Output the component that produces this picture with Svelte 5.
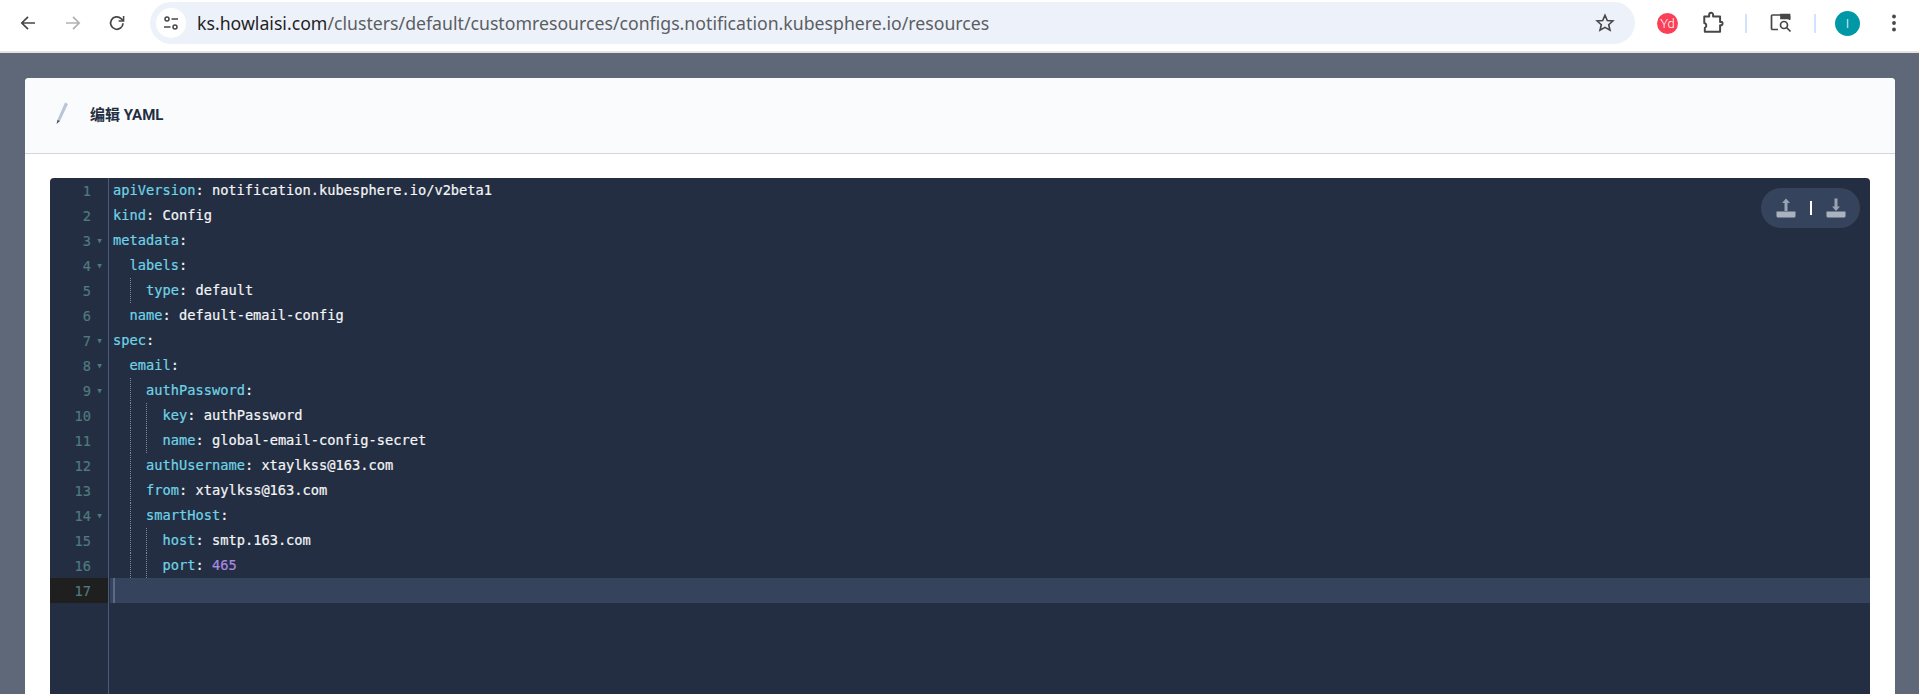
<script lang="ts">
  type Line = { indent: number; key?: string; value?: string; num?: string; fold?: boolean };

  const lines: Line[] = [
    { indent: 0, key: "apiVersion", value: "notification.kubesphere.io/v2beta1" },
    { indent: 0, key: "kind", value: "Config" },
    { indent: 0, key: "metadata", fold: true },
    { indent: 1, key: "labels", fold: true },
    { indent: 2, key: "type", value: "default" },
    { indent: 1, key: "name", value: "default-email-config" },
    { indent: 0, key: "spec", fold: true },
    { indent: 1, key: "email", fold: true },
    { indent: 2, key: "authPassword", fold: true },
    { indent: 3, key: "key", value: "authPassword" },
    { indent: 3, key: "name", value: "global-email-config-secret" },
    { indent: 2, key: "authUsername", value: "xtaylkss@163.com" },
    { indent: 2, key: "from", value: "xtaylkss@163.com" },
    { indent: 2, key: "smartHost", fold: true },
    { indent: 3, key: "host", value: "smtp.163.com" },
    { indent: 3, key: "port", num: "465" },
    { indent: 0 },
  ];
  const activeLine = 16;
</script>

<div class="page">
  <header class="toolbar">
    <div class="nav">
      <svg class="nav-icon" viewBox="0 0 20 20" fill="none" stroke="#474747" stroke-width="1.700"><path d="M17 10H4M10 3.800 3.800 10l6.200 6.200" /></svg>
      <svg class="nav-icon" viewBox="0 0 20 20" fill="none" stroke="#b2b2b2" stroke-width="1.700"><path d="M3 10h13M10 3.800l6.200 6.200-6.200 6.200" /></svg>
      <svg class="nav-icon" viewBox="0 0 20 20" fill="none" stroke="#474747" stroke-width="1.700"><path d="M16 10.200a6.200 6.200 0 1 1-1.900-4.600L16 7.400" /><path d="M16.600 3v5h-5" stroke-width="1.500" /></svg>
    </div>
    <div class="omnibox">
      <span class="site-info">
        <svg width="16" height="16" viewBox="0 0 16 16" fill="none" stroke="#474747" stroke-width="1.500"><circle cx="4" cy="4" r="2" /><path d="M8.500 4H15M1 12h6.500" /><circle cx="12" cy="12" r="2" /></svg>
      </span>
      <span class="url"><span class="host">ks.howlaisi.com</span>/clusters/default/customresources/configs.notification.kubesphere.io/resources</span>
      <svg class="star" width="20" height="20" viewBox="0 0 20 20" fill="none" stroke="#474747" stroke-width="1.600"><path d="m10 2.300 2.300 5.200 5.600.5-4.200 3.700 1.300 5.500L10 14.300l-5 2.900 1.300-5.500L2.100 8l5.600-.5z" /></svg>
    </div>
    <div class="actions">
      <span class="yd">Yd</span>
      <svg class="puzzle" width="22" height="24" viewBox="0 0 20 22" fill="none" stroke="#474747" stroke-width="1.800"><path d="M2 5h4.500V3.500a1.800 1.800 0 0 1 3.600 0V5h6.400v5H18a1.800 1.800 0 0 1 0 3h-1.500v6H2.500v-3.500a2.500 2.500 0 0 0 1-3.500 2.500 2.500 0 0 0-1.500-1z" stroke-linejoin="round" /></svg>
      <span class="divider"></span>
      <svg class="tab-search" width="22" height="20" viewBox="0 0 22 20" fill="none" stroke="#474747" stroke-width="1.700"><path d="M8 16.500H2.500a1 1 0 0 1-1-1V3a1 1 0 0 1 1-1h16a1 1 0 0 1 1 1v4" /><path d="M11 1.500h8.500v4H11z" fill="#474747" /><circle cx="14" cy="12" r="3.500" /><path d="m16.500 14.500 4 4" /></svg>
      <span class="divider second"></span>
      <span class="avatar">I</span>
      <svg class="menu" width="6" height="20" viewBox="0 0 6 20" fill="#474747"><circle cx="3" cy="3.500" r="1.900" /><circle cx="3" cy="10" r="1.900" /><circle cx="3" cy="16.500" r="1.900" /></svg>
    </div>
  </header>

  <main class="overlay">
    <section class="modal">
      <div class="modal-head">
        <svg class="pencil" width="18" height="24" viewBox="0 0 18 24"><path d="M12 1.500 15 3 7 20 4.500 18.800z" fill="#b9c6d6" /><path d="M4.500 18.800 7 20l-3.500 3z" fill="#4a5568" /></svg>
        <h2>编辑 YAML</h2>
      </div>
      <div class="modal-body">
        <div class="editor">
          <div class="tools">
            <svg width="20" height="20" viewBox="0 0 20 20"><path d="M10 .5 14 5h-2.500v8h-3V5H6z" fill="#9aa3b4" /><path d="M.5 13.500h19V18a1.500 1.500 0 0 1-1.500 1.500H2A1.500 1.500 0 0 1 .5 18z" fill="#aab1bf" /></svg>
            <span class="tool-sep"></span>
            <svg width="20" height="20" viewBox="0 0 20 20"><path d="M10 13 6 8.500h2.500V.5h3v8H14z" fill="#9aa3b4" /><path d="M.5 13.500h19V18a1.500 1.500 0 0 1-1.500 1.500H2A1.500 1.500 0 0 1 .5 18z" fill="#aab1bf" /></svg>
          </div>
          <div class="gutter">
            {#each lines as line, i}
              <div class="gutter-row" class:active={i === activeLine}>
                <span class="num">{i + 1}</span>
                <span class="fold">{line.fold ? "▾" : ""}</span>
              </div>
            {/each}
          </div>
          <div class="code">
            {#each lines as line, i}
              <div class="code-row" class:active={i === activeLine}>
                {#each Array(line.indent) as _, level}
                  <span class="indent" class:guide={level > 0}></span>
                {/each}
                {#if line.key}<span class="key">{line.key}</span><span class="val">{":\u00a0"}</span>{/if}
                {#if line.value}<span class="val">{line.value}</span>{/if}
                {#if line.num}<span class="number">{line.num}</span>{/if}
                {#if i === activeLine}<span class="cursor"></span>{/if}
              </div>
            {/each}
          </div>
        </div>
      </div>
    </section>
  </main>
</div>

<style>
  :global(body) {
    margin: 0;
    overflow: hidden;
  }

  .page {
    width: 1919px;
    height: 694px;
    display: flex;
    flex-direction: column;
    overflow: hidden;
    font-family: "Roboto", "Noto Sans", sans-serif;
  }

  /* browser chrome */
  .toolbar {
    height: 53px;
    flex: none;
    display: flex;
    align-items: flex-start;
    background: #fff;
    border-bottom: 2px solid #e4e4e4;
    padding-top: 2px;
    box-sizing: border-box;
  }
  .nav {
    display: flex;
    align-items: center;
    gap: 24.500px;
    height: 42px;
    padding-left: 18px;
    width: 132px;
    box-sizing: border-box;
  }
  .nav-icon {
    width: 20px;
    height: 20px;
    flex: none;
  }
  .omnibox {
    width: 1485px;
    height: 42px;
    margin-left: 18px;
    border-radius: 21px;
    background: #edf2fa;
    display: flex;
    align-items: center;
    padding-left: 6px;
    box-sizing: border-box;
  }
  .site-info {
    width: 30px;
    height: 30px;
    border-radius: 50%;
    background: #fff;
    display: flex;
    align-items: center;
    justify-content: center;
  }
  .url {
    margin-left: 11px;
    font-family: "Noto Sans", sans-serif;
    font-size: 17.700px;
    color: #5b5e63;
    flex: 1;
    white-space: nowrap;
  }
  .host {
    color: #1f1f1f;
  }
  .star {
    margin-right: 20px;
  }
  .actions {
    display: flex;
    align-items: center;
    height: 42px;
  }
  .yd {
    margin-left: 22px;
    width: 21px;
    height: 21px;
    border-radius: 50%;
    background: #fb3f56;
    color: #fff;
    font-size: 13px;
    font-weight: 300;
    display: flex;
    align-items: center;
    justify-content: center;
  }
  .puzzle {
    margin-left: 24px;
  }
  .divider {
    width: 2px;
    height: 19px;
    background: #d3e3fd;
    margin-left: 21px;
  }
  .tab-search {
    margin-left: 23px;
  }
  .divider.second {
    margin-left: 22px;
  }
  .avatar {
    margin-left: 19px;
    width: 25px;
    height: 25px;
    border-radius: 50%;
    background: #0097a7;
    color: #fff;
    font-size: 13px;
    font-weight: 300;
    display: flex;
    align-items: center;
    justify-content: center;
  }
  .menu {
    margin-left: 31px;
  }

  /* modal on dimmed page */
  .overlay {
    flex: 1;
    min-height: 0;
    background: #5f6878;
    padding: 25px 24px 0 25px;
    display: flex;
  }
  .modal {
    flex: 1;
    display: flex;
    flex-direction: column;
    background: #fff;
    border-radius: 4px 4px 0 0;
    overflow: hidden;
  }
  .modal-head {
    height: 76px;
    flex: none;
    display: flex;
    align-items: center;
    background: #f9fbfd;
    border-bottom: 1px solid #d1d5de;
    padding: 0 0 5px 28px;
    box-sizing: border-box;
    gap: 19px;
  }
  .modal-head h2 {
    margin: 0;
    font-size: 15px;
    font-weight: 700;
    color: #242e42;
    font-family: "Roboto", "Noto Sans CJK SC", sans-serif;
  }
  .modal-body {
    flex: 1;
    min-height: 0;
    padding: 24px 25px 0;
  }

  /* yaml editor */
  .editor {
    position: relative;
    height: 100%;
    display: flex;
    background: #242e42;
    border-radius: 4px 4px 0 0;
    font-family: "DejaVu Sans Mono", monospace;
    font-size: 13.700px;
    -webkit-text-stroke: 0.2px;
  }
  .tools {
    position: absolute;
    top: 10px;
    right: 10px;
    width: 99px;
    height: 40px;
    border-radius: 20px;
    background: #36435c;
    display: flex;
    align-items: center;
    justify-content: center;
    gap: 14px;
    z-index: 1;
  }
  .tool-sep {
    width: 2px;
    height: 14px;
    background: #fff;
  }
  .gutter {
    width: 58px;
    flex: none;
    border-right: 1px solid #4a5a78;
  }
  .gutter-row {
    height: 25px;
    display: flex;
    align-items: center;
    justify-content: flex-end;
    color: #4f7a7e;
  }
  .gutter-row.active {
    background: #1f1f1f;
  }
  .num {
    text-align: right;
  }
  .fold {
    width: 17px;
    font-size: 11px;
    text-align: center;
    color: #4f7a7e;
  }
  .code {
    flex: 1;
    min-width: 0;
  }
  .code-row {
    height: 25px;
    line-height: 25px;
    padding-left: 4px;
    display: flex;
    white-space: pre;
  }
  .code-row.active {
    background: #36435c;
    margin-left: 1px;
    padding-left: 3px;
  }
  .indent {
    width: 16.500px;
    flex: none;
    box-sizing: border-box;
  }
  .indent.guide {
    border-left: 1px dotted #7d8797;
  }
  .key {
    color: #6fd3e6;
  }
  .val {
    color: #f3f5f7;
  }
  .number {
    color: #a98be0;
  }
  .cursor {
    width: 2px;
    background: #5d6a85;
  }
</style>
